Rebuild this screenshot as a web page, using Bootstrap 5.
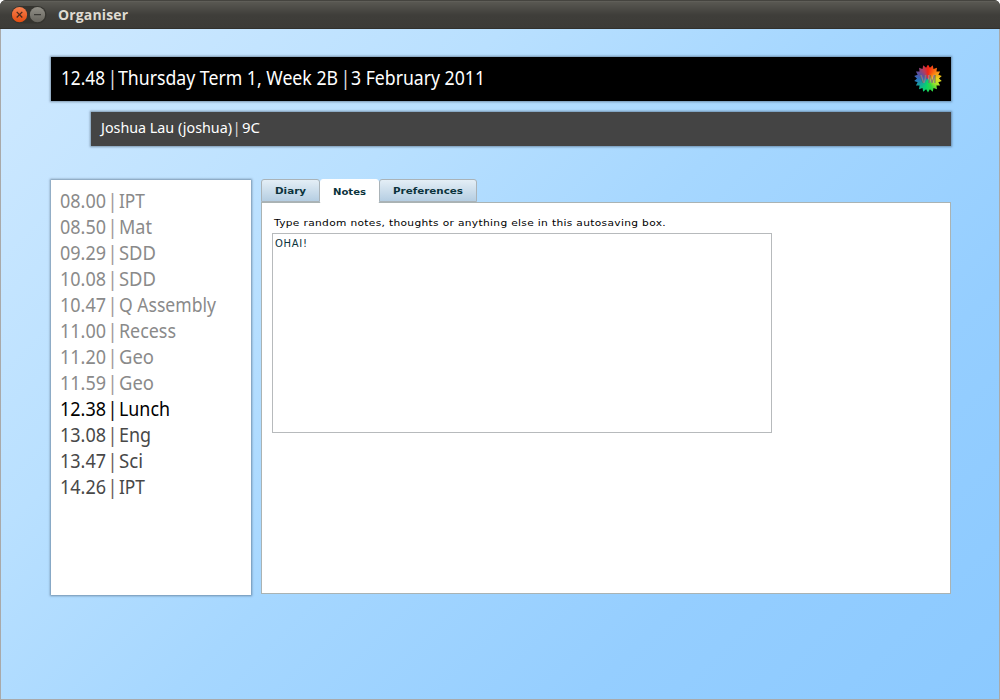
<!DOCTYPE html>
<html lang="en">
<head>
<meta charset="utf-8">
<title>Organiser</title>
<link href="https://cdn.jsdelivr.net/npm/bootstrap@5.3.0/dist/css/bootstrap.min.css" rel="stylesheet">
<style>
html{background:#fff}
body{width:1000px;height:700px;overflow:hidden;background:#fff;font-family:"DejaVu Sans",sans-serif}
.win{width:1000px;height:700px;border-radius:6px 6px 0 0;overflow:hidden;background:#3c3b37}
.titlebar{height:29px;flex:none;padding-left:11px;background:linear-gradient(#45443f 0,#45443f 1px,#66655f 1px,#595852 2px,#3f3e3a 15px,#3c3b37 28px,#32312d 28px)}
.titlebar b{font:bold 14px/20px "Open Sans",sans-serif;color:#dfdbd2;margin-left:11px;letter-spacing:.15px}
.desk{border:1px solid #a9a9a9;border-top:0;background:linear-gradient(135deg,#cfe9ff 0,#b9e0ff 30%,#a6d7ff 50%,#95ceff 75%,#8bc9ff 100%);padding:28px 48px 0 50px}
.huma{font-family:"Noto Sans",sans-serif;white-space:nowrap}
.shade{box-shadow:0 0 2px 1px rgba(50,70,90,.5)}
.clock{height:44px;width:900px;background:#000;color:#fff;padding:0 9px 0 10px}
.clock .huma{font-size:19px;line-height:42px;height:44px;padding-bottom:2px}
.seg{display:inline-block}
.rule{flex:none;width:1px;display:flex;justify-content:center;color:#d8d8d8}
.person{height:34px;width:860px;margin:11px 0 0 40px;background:#444;color:#fff;font-size:15px;line-height:31px;padding:0 0 3px 9px}
.sx{display:inline-block;transform-origin:0 50%}
.times{width:200px;height:415px;background:#fff;padding:8px 0 0 9px;margin-top:1px}
.times>div{height:26px;line-height:26px;font-size:19px;color:#8a8a8a;display:flex}
.times>.now{color:#000}.times>.next{color:#484848}
.times .t{width:52px}.times .rule{margin-right:6px;color:#a39a9a}
.times .now .rule{color:#200d10}.times .next .rule{color:#705f60}
.panes{width:690px;margin-left:10px}
.tabs{height:23px;position:relative;z-index:1}
.tabs .tb{height:23px;border:1px solid #aab3b8;border-radius:3px 3px 0 0;background:linear-gradient(#e4eef6,#b5cee2);color:#0b333c;font:bold 9.500px/22px "DejaVu Sans",sans-serif;padding-left:13px;white-space:nowrap}
.tabs .tb.on{background:#fff;border-color:#fff;height:24px;line-height:23px;padding-left:12px}
.body1{height:392px;background:#fff;border:1px solid #aab3b3;padding:13px 10px 0}
.body1 p{font-size:9.500px;line-height:14px;margin:0 0 3px 2px;color:#000;white-space:nowrap;letter-spacing:.3px}
.memo{display:block;width:500px;height:200px;border:1px solid #b7babc;border-radius:0;resize:none;padding:3px 2px;font:10px/14px "DejaVu Sans",sans-serif;color:#0b333c;letter-spacing:.7px;outline:0;background:#fff}
.wheel{width:28px;height:28px;margin-top:-1px;background:conic-gradient(#f32414,#f97a12 45deg,#f0d01c 85deg,#b9e329 115deg,#36d83c 155deg,#08d46a 195deg,#16a39b 235deg,#2b6fc0 270deg,#5a4fa0 300deg,#b83a5a 335deg,#f32414);color:#857a78;font:bold 10px/30px "Liberation Sans",sans-serif;text-align:center;letter-spacing:1px;text-indent:1px}
</style>
</head>
<body>
<div class="win d-flex flex-column">
  <div class="titlebar d-flex align-items-center">
    <svg width="36" height="20" viewBox="0 0 36 20">
      <defs><linearGradient id="o" x2="0" y2="1"><stop stop-color="#f7804f"/><stop offset="1" stop-color="#e34c10"/></linearGradient>
      <linearGradient id="g" x2="0" y2="1"><stop stop-color="#918f87"/><stop offset="1" stop-color="#66645d"/></linearGradient></defs>
      <rect x="0" y="1" width="35.500" height="17.500" rx="8.700" fill="#35342f"/>
      <circle cx="8.500" cy="9.700" r="7.600" fill="url(#o)"/><circle cx="26.500" cy="9.700" r="7.600" fill="url(#g)"/>
      <path d="M5.700 6.900l5.600 5.600M11.300 6.900l-5.600 5.600" stroke="#4b2b1d" stroke-width="1.300"/><path d="M23 9.700h7" stroke="#3b3a36" stroke-width="1.200"/>
    </svg>
    <b>Organiser</b>
  </div>
  <div class="desk flex-grow-1">
    <div class="clock shade d-flex align-items-center justify-content-between">
      <div class="huma d-flex align-items-center">
        <span class="seg" style="width:51px"><span class="sx fit" data-w="44">12.48</span></span><span class="rule">|</span>
        <span class="seg" style="width:232px;padding-left:5px"><span class="sx fit" data-w="220">Thursday Term 1, Week 2B</span></span><span class="rule">|</span>
        <span class="seg" style="padding-left:5px"><span class="sx fit" data-w="134">3 February 2011</span></span>
      </div>
      <div class="wheel" id="wheel">VM</div>
    </div>
    <div class="person shade huma d-flex align-items-center">
      <span class="seg" style="width:136px;padding-left:1px"><span class="sx fit" data-w="131">Joshua Lau (joshua)</span></span><span class="rule">|</span>
      <span class="seg" style="padding-left:5px"><span class="sx fit" data-w="18">9C</span></span>
    </div>
    <div class="d-flex" style="margin-top:33px">
      <div class="times shade huma" id="times"></div>
      <div class="panes">
        <div class="tabs d-flex">
          <div class="tb" style="width:59px"><span class="sx fit" data-w="31">Diary</span></div>
          <div class="tb on" style="width:59px"><span class="sx fit" data-w="33">Notes</span></div>
          <div class="tb" style="width:98px"><span class="sx fit" data-w="70">Preferences</span></div>
        </div>
        <div class="body1">
          <p><span class="sx fit" data-w="392">Type random notes, thoughts or anything else in this autosaving box.</span></p>
          <textarea class="memo" spellcheck="false">OHAI!</textarea>
        </div>
      </div>
    </div>
  </div>
</div>
<script src="https://cdn.jsdelivr.net/npm/bootstrap@5.3.0/dist/js/bootstrap.bundle.min.js"></script>
<script>
const rows=[['08.00','IPT',26],['08.50','Mat',33],['09.29','SDD',37],['10.08','SDD',37],['10.47','Q Assembly',97],['11.00','Recess',57],['11.20','Geo',35],['11.59','Geo',35],['12.38','Lunch',51],['13.08','Eng',32],['13.47','Sci',24],['14.26','IPT',26]];
document.getElementById('times').innerHTML=rows.map((r,i)=>`<div class="${i==8?'now':i>8?'next':''}"><span class="t"><span class="sx fit" data-w="46">${r[0]}</span></span><span class="rule">|</span><span class="sx fit" data-w="${r[2]}">${r[1]}</span></div>`).join('');
// Scale each label to its set width
document.querySelectorAll('.fit').forEach(e=>{
  e.style.transform=`scaleX(${+e.dataset.w/e.getBoundingClientRect().width})`;
});
// Toothed edge of the colour wheel
const pts=[];
for(let i=0;i<36;i++){const a=i*Math.PI/18,r=i%2?11:14;pts.push((14+r*Math.sin(a)).toFixed(2)+'px '+(14-r*Math.cos(a)).toFixed(2)+'px');}
document.getElementById('wheel').style.clipPath='polygon('+pts+')';
</script>
</body>
</html>
